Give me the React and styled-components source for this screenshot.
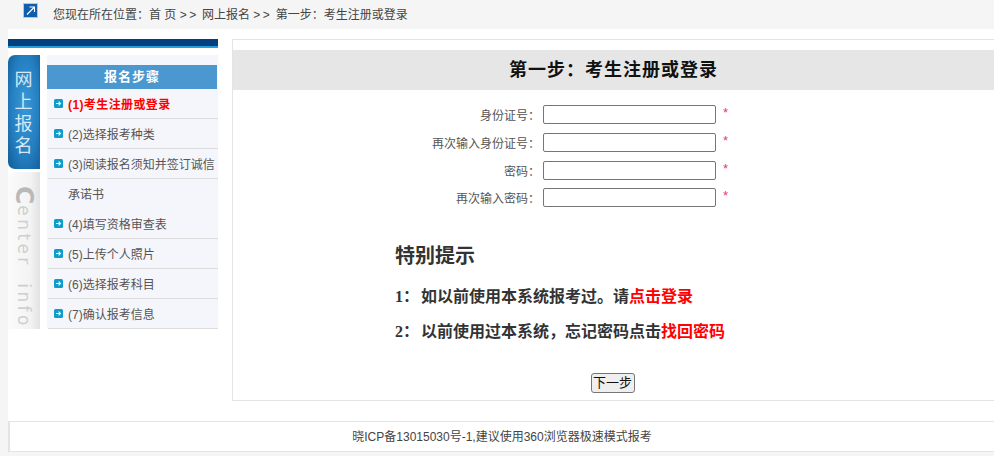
import React from "react"
import styled, { createGlobalStyle } from "styled-components"

const GlobalStyle = createGlobalStyle`
  html, body {
    margin: 0;
    padding: 0;
    background: #f5f5f5;
    overflow: hidden;
  }
  body, input, button {
    font-family: "Liberation Sans", "Noto Sans CJK SC", sans-serif;
  }
`

const Page = styled.div`
  width: 994px;
  height: 456px;
  overflow: hidden;
`

const TopBar = styled.div`
  display: flex;
  align-items: flex-start;
  height: 29px;
  padding-left: 23px;
  font-size: 12px;
  color: #444;
`

const LinkIcon = styled.svg`
  display: block;
  width: 15px;
  height: 15px;
  margin-top: 3px;
`

const Crumbs = styled.div`
  margin-left: 15px;
  line-height: 16px;
  padding-top: 7px;
  white-space: pre;
`

const Sep = styled.span`
  letter-spacing: 2.5px;
`

const Main = styled.div`
  margin-left: 8px;
  height: 423px;
  background: #fff;
  border-bottom: 1px solid #e8e8e8;
  padding-top: 10px;
  box-sizing: border-box;
`

const Columns = styled.div`
  display: flex;
  align-items: flex-start;
  height: 362px;
`

const Sidebar = styled.div`
  width: 210px;
  flex: none;
`

const Stripe = styled.div`
  height: 7px;
  background: #02407f;
  border-bottom: 2px solid #259fdc;
`

const SideBody = styled.div`
  display: flex;
  height: 274px;
  margin-top: 7px;
  overflow: hidden;
`

const Tabs = styled.div`
  width: 32px;
  flex: none;
`

const ActiveTab = styled.div`
  height: 114px;
  border-radius: 7px 0 0 7px;
  background: radial-gradient(ellipse at 55% 45%, #3a97d6 0%, #2580c2 55%, #125a94 100%);
  border-right: 1px solid #1a6aa8;
  box-sizing: border-box;
  color: #d4e8f6;
  font-size: 18px;
  line-height: 22px;
  text-align: center;
  padding-top: 14px;
`

const IdleTab = styled.div`
  width: 32px;
  height: 158px;
  margin-top: 3px;
  border-radius: 7px 0 0 0;
  background: linear-gradient(90deg, #fbfbfb 0%, #f3f3f3 70%, #e2e2e2 100%);
  overflow: hidden;
  box-sizing: border-box;
  color: #cfcfcf;
  font-size: 17px;
  font-family: "DejaVu Sans", sans-serif;
  letter-spacing: 3.4px;
  word-spacing: -1px;
  writing-mode: vertical-rl;
  white-space: pre;
  line-height: 32px;
  padding-top: 14px;
`

const BigLetter = styled.span`
  font-size: 25px;
  font-weight: bold;
  color: #b9b9b9;
  letter-spacing: 1px;
`

const Steps = styled.div`
  flex: 1;
  margin-left: 7px;
  padding-top: 10px;
  min-width: 0;
  background: #f5f6fb;
`

const StepsTitle = styled.div`
  height: 24px;
  width: 170px;
  background: #4b98d0;
  color: #fff;
  font-size: 13px;
  font-weight: bold;
  letter-spacing: 1px;
  line-height: 24px;
  text-align: center;
`

const Step = styled.div`
  display: flex;
  align-items: center;
  height: 29px;
  margin-left: 1px;
  padding-left: 6px;
  border-bottom: 1px solid ${p => (p.$plain ? "transparent" : "#dcdcdc")};
  font-size: 12px;
  font-weight: ${p => (p.$active ? "bold" : "normal")};
  letter-spacing: ${p => (p.$active ? "0.4px" : "0")};
  color: ${p => (p.$active ? "#f00" : "#555")};
  white-space: nowrap;
  overflow: hidden;
`

const StepIcon = styled.svg`
  width: 9px;
  height: 9px;
  flex: none;
  margin-right: 5px;
`

const StepGap = styled.span`
  display: block;
  width: 14px;
  flex: none;
`

const Panel = styled.div`
  flex: 1;
  margin-left: 14px;
  height: 362px;
  border: 1px solid #e4e4e4;
  border-right: none;
  box-sizing: border-box;
  padding-top: 10px;
  background: #fff;
`

const PanelTitle = styled.h2`
  margin: 0;
  height: 40px;
  background: #e6e6e6;
  color: #111;
  font-size: 18px;
  font-weight: bold;
  line-height: 40px;
  letter-spacing: 1px;
  text-align: center;
  font-family: "Liberation Serif", "Noto Sans CJK SC", serif;
`

const Form = styled.div`
  display: grid;
  grid-template-columns: 307px 173px auto;
  grid-auto-rows: 19px;
  column-gap: 3px;
  row-gap: 8.75px;
  margin-top: 15px;
  align-items: center;
`

const Label = styled.label`
  height: 19px;
  text-align: right;
  font-size: 12px;
  color: #555;
  line-height: 23px;
`

const Field = styled.input`
  width: 173px;
  height: 19px;
  box-sizing: border-box;
  border: 1px solid #767676;
  border-radius: 2px;
  padding: 0;
  background: #fff;
`

const Star = styled.span`
  color: #f0386a;
  font-size: 13px;
  line-height: 12px;
  margin: -3px 0 0 4px;
`

const Notice = styled.div`
  margin: 34px 0 0 162px;
  color: #333;
`

const NoticeTitle = styled.h3`
  margin: 0 0 14px;
  font-size: 20px;
  line-height: 30px;
  font-weight: bold;
`

const NoticeLine = styled.p`
  margin: 0 0 11px;
  font-size: 16px;
  line-height: 24px;
  font-weight: bold;
  white-space: pre;
  font-family: "Liberation Serif", "Noto Sans CJK SC", serif;
`

const NoticeNumber = styled.span`
  margin-right: 2px;
`

const RedLink = styled.a`
  color: #f00;
`

const ButtonRow = styled.div`
  display: flex;
  justify-content: center;
  margin-top: 29px;
  padding-right: 2px;
`

const NextButton = styled.button`
  width: 44px;
  height: 20px;
  padding: 0;
  font-size: 13px;
  line-height: 16px;
  color: #111;
  background: #efefef;
  border: 1px solid #767676;
  border-radius: 3px;
`

const Footer = styled.div`
  height: 31px;
  margin-top: 20px;
  border: 1px solid #e4e4e4;
  border-left-width: 2px;
  border-right: none;
  box-sizing: border-box;
  font-size: 12px;
  line-height: 30px;
  color: #444;
  text-align: center;
`

const steps = [
  { text: "(1)考生注册或登录", active: true },
  { text: "(2)选择报考种类" },
  { text: "(3)阅读报名须知并签订诚信" },
  { text: "承诺书", plain: true },
  { text: "(4)填写资格审查表" },
  { text: "(5)上传个人照片" },
  { text: "(6)选择报考科目" },
  { text: "(7)确认报考信息" },
]

const fields = ["身份证号：", "再次输入身份证号：", "密码：", "再次输入密码："]

function Arrow() {
  return (
    <StepIcon viewBox="0 0 9 9">
      <rect width="9" height="9" rx="1.5" fill="#0e9ccb" />
      <path d="M2 4.5h4.4M4.6 2.6l1.9 1.9-1.9 1.9" fill="none" stroke="#fff" strokeWidth="1.1" />
    </StepIcon>
  )
}

export default function App() {
  return (
    <Page>
      <GlobalStyle />
      <TopBar>
        <LinkIcon viewBox="0 0 15 15">
          <rect x="0.5" y="0.5" width="14" height="14" fill="#0f5fae" stroke="#b9c6d6" />
          <path d="M4 11.5L11 4.5M6.5 4h5v5" fill="none" stroke="#fff" strokeWidth="1.1" />
        </LinkIcon>
        <Crumbs>您现在所在位置：首 页 <Sep>&gt;&gt;</Sep> 网上报名 <Sep>&gt;&gt;</Sep> 第一步：考生注册或登录</Crumbs>
      </TopBar>
      <Main>
        <Columns>
          <Sidebar>
            <Stripe />
            <SideBody>
              <Tabs>
                <ActiveTab>网<br />上<br />报<br />名</ActiveTab>
                <IdleTab><BigLetter>C</BigLetter>enter  infor</IdleTab>
              </Tabs>
              <Steps>
                <StepsTitle>报名步骤</StepsTitle>
                {steps.map(step => (
                  <Step key={step.text} $active={step.active} $plain={step.plain}>
                    {step.plain ? <StepGap /> : <Arrow />}
                    {step.text}
                  </Step>
                ))}
              </Steps>
            </SideBody>
          </Sidebar>
          <Panel>
            <PanelTitle>第一步：考生注册或登录</PanelTitle>
            <Form>
              {fields.map(label => (
                <React.Fragment key={label}>
                  <Label>{label}</Label>
                  <Field />
                  <Star>*</Star>
                </React.Fragment>
              ))}
            </Form>
            <Notice>
              <NoticeTitle>特别提示</NoticeTitle>
              <NoticeLine><NoticeNumber>1：</NoticeNumber>如以前使用本系统报考过。请<RedLink>点击登录</RedLink></NoticeLine>
              <NoticeLine><NoticeNumber>2：</NoticeNumber>以前使用过本系统，忘记密码点击<RedLink>找回密码</RedLink></NoticeLine>
            </Notice>
            <ButtonRow>
              <NextButton>下一步</NextButton>
            </ButtonRow>
          </Panel>
        </Columns>
        <Footer>晓ICP备13015030号-1,建议使用360浏览器极速模式报考</Footer>
      </Main>
    </Page>
  )
}
